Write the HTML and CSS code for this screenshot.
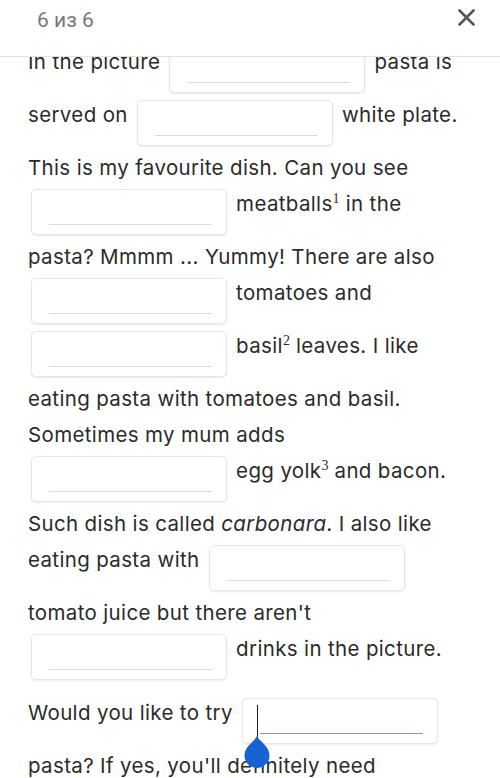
FILE: index.html
```html
<!DOCTYPE html>
<html lang="en">
<head>
    <meta charset="UTF-8">
    <meta name="viewport" content="width=device-width, initial-scale=1.0">
    <title>6 из 6</title>
    <link rel="stylesheet" href="styles.css">
</head>
<body>
    <header class="topbar">
        <span class="counter">6 из 6</span>
        <button class="close" aria-label="Close">
            <svg width="17" height="17" viewBox="0 0 17 17">
                <path d="M1.5 1.5 L15.5 15.5 M15.5 1.5 L1.5 15.5" stroke="#555" stroke-width="2.6" stroke-linecap="round" fill="none"/>
            </svg>
        </button>
    </header>

    <main class="exercise">
        <p class="text">
            In the picture <span class="blank"><span class="blank-line"></span></span> pasta is
            served on <span class="blank"><span class="blank-line"></span></span> white plate.
            This is my favourite dish. Can you see
            <span class="blank"><span class="blank-line"></span></span> meatballs<sup class="note">1</sup> in the
            pasta? Mmmm ... Yummy! There are also
            <span class="blank"><span class="blank-line"></span></span> tomatoes and
            <span class="blank"><span class="blank-line"></span></span> basil<sup class="note">2</sup> leaves. I like
            eating pasta with tomatoes and basil.
            Sometimes my mum adds
            <span class="blank"><span class="blank-line"></span></span> egg yolk<sup class="note">3</sup> and bacon.
            Such dish is called <em>carbonara</em>. I also like
            eating pasta with <span class="blank"><span class="blank-line"></span></span>
            tomato juice but there aren't
            <span class="blank"><span class="blank-line"></span></span> drinks in the picture.
        </p>
        <p class="text">
            Would you like to try
            <span class="blank is-active">
                <span class="blank-line"></span>
                <span class="caret"></span>
                <svg class="handle" width="28" height="33" viewBox="0 0 28 33">
                    <path d="M14 0 C17 6 26.5 10 26.5 19.5 A12.5 12.5 0 0 1 1.5 19.5 C1.5 10 11 6 14 0 Z" fill="#1763d4"/>
                </svg>
            </span>
            pasta? If yes, you'll definitely need
        </p>
    </main>
</body>
</html>
```

FILE: styles.css
```css
body {
    margin: 0;
    background-color: #fff;
    font-family: Inter, 'Liberation Sans', sans-serif;
    color: #2b2b2b;
}

.topbar {
    position: fixed;
    top: 0;
    left: 0;
    right: 0;
    height: 57px;
    box-sizing: border-box;
    display: flex;
    justify-content: space-between;
    align-items: flex-start;
    padding: 8px 25px 0 37px;
    background-color: #fff;
    border-bottom: 1px solid #e2e2e2;
    z-index: 2;
}

.counter {
    font-family: Roboto, sans-serif;
    font-size: 21px;
    line-height: 24px;
    color: #777;
}

.close {
    border: none;
    background: none;
    padding: 0;
    margin-top: 1px;
    width: 17px;
    height: 17px;
    cursor: pointer;
}

.exercise {
    padding: 44px 38px 0 28px;
}

.text {
    margin: 0 0 11px;
    font-size: 20.5px;
    line-height: 36px;
    letter-spacing: 0.35px;
}

.note {
    font-family: 'Liberation Serif', serif;
    font-size: 14px;
    line-height: 0;
    letter-spacing: 0;
    vertical-align: 8px;
}

/* пустое поле для ответа */
.blank {
    display: inline-block;
    position: relative;
    width: 196px;
    height: 46px;
    box-sizing: border-box;
    margin: 3px 3px 4px;
    vertical-align: -28px;
    background-color: #fff;
    border: 1px solid #e6e6e6;
    border-radius: 5px;
    box-shadow: 0 1px 2px rgba(0, 0, 0, 0.08);
}

.blank-line {
    display: block;
    height: 1px;
    margin: 34px 14px 0 17px;
    background-color: #dadada;
}

.blank.is-active .blank-line {
    background-color: #35bdd6;
}

.caret {
    position: absolute;
    left: 14px;
    top: 6px;
    width: 1.5px;
    height: 32px;
    background-color: #222;
}

.handle {
    position: absolute;
    left: 0;
    top: 37px;
}
```
